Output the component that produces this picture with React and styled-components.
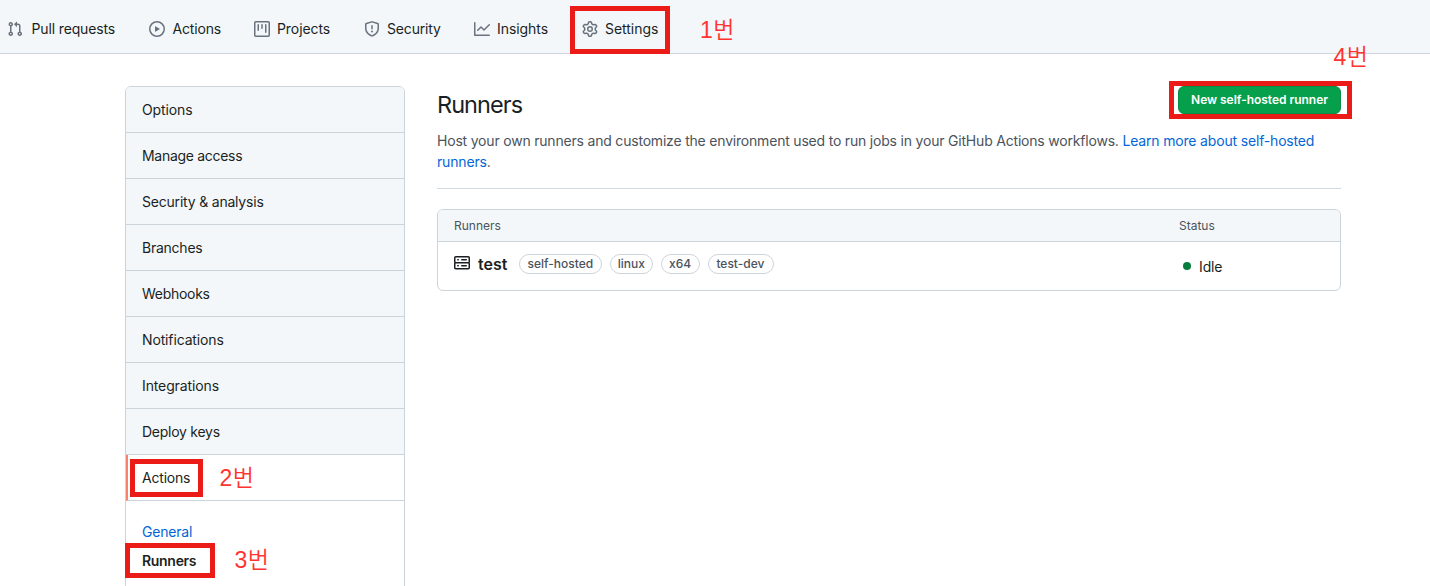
import React from "react";
import styled, { createGlobalStyle } from "styled-components";

const GlobalStyle = createGlobalStyle`
  * { box-sizing: border-box; }
  body {
    margin: 0;
    background: #fff;
    color: #1b1f23;
    font: 400 14px/21px Inter, "Noto Sans CJK KR", sans-serif;
    overflow: hidden;
  }
`;

const icons = {
  pull: "M7.177 3.073L9.573.677A.25.25 0 0110 .854v4.792a.25.25 0 01-.427.177L7.177 3.427a.25.25 0 010-.354zM3.75 2.5a.75.75 0 100 1.5.75.75 0 000-1.5zm-2.25.75a2.25 2.25 0 113 2.122v5.256a2.251 2.251 0 11-1.5 0V5.372A2.25 2.25 0 011.5 3.25zM11 2.5h-1V4h1a1 1 0 011 1v5.628a2.251 2.251 0 101.5 0V5A2.5 2.5 0 0011 2.5zm1 10.25a.75.75 0 111.5 0 .75.75 0 01-1.5 0zM3.75 12a.75.75 0 100 1.5.75.75 0 000-1.5z",
  play: "M1.5 8a6.5 6.5 0 1113 0 6.5 6.5 0 01-13 0zM8 0a8 8 0 100 16A8 8 0 008 0zM6.379 5.227A.25.25 0 006 5.442v5.117a.25.25 0 00.379.214l4.264-2.559a.25.25 0 000-.428L6.379 5.227z",
  project: "M1.75 0A1.75 1.75 0 000 1.75v12.5C0 15.216.784 16 1.75 16h12.5A1.75 1.75 0 0016 14.25V1.75A1.75 1.75 0 0014.25 0H1.75zM1.5 1.75a.25.25 0 01.25-.25h12.5a.25.25 0 01.25.25v12.5a.25.25 0 01-.25.25H1.75a.25.25 0 01-.25-.25V1.75zM11.75 3a.75.75 0 00-.75.75v7.5a.75.75 0 001.5 0v-7.5a.75.75 0 00-.75-.75zm-8.25.75a.75.75 0 011.5 0v5.5a.75.75 0 01-1.5 0v-5.5zM8 3a.75.75 0 00-.75.75v3.5a.75.75 0 001.5 0v-3.5A.75.75 0 008 3z",
  shield: "M7.467.133a1.75 1.75 0 011.066 0l5.25 1.68A1.75 1.75 0 0115 3.48V7c0 1.566-.32 3.182-1.303 4.682-.983 1.498-2.585 2.813-5.032 3.855a1.7 1.7 0 01-1.33 0c-2.447-1.042-4.049-2.357-5.032-3.855C1.32 10.182 1 8.566 1 7V3.48a1.75 1.75 0 011.217-1.667l5.25-1.68zm.61 1.429a.25.25 0 00-.153 0l-5.25 1.68a.25.25 0 00-.174.238V7c0 1.358.275 2.666 1.057 3.86.784 1.194 2.121 2.34 4.366 3.297a.2.2 0 00.154 0c2.245-.956 3.582-2.104 4.366-3.298C13.225 9.666 13.5 8.36 13.5 7V3.48a.25.25 0 00-.174-.237l-5.25-1.68zM9 10.5a1 1 0 11-2 0 1 1 0 012 0zm-.25-5.75a.75.75 0 10-1.5 0v3a.75.75 0 001.5 0v-3z",
  graph: "M1.5 1.75a.75.75 0 00-1.5 0v12.5c0 .414.336.75.75.75h14.5a.75.75 0 000-1.5H1.5V1.75zm14.28 2.53a.75.75 0 00-1.06-1.06L10 7.94 7.53 5.47a.75.75 0 00-1.06 0L3.22 8.72a.75.75 0 001.06 1.06L7 7.06l2.47 2.47a.75.75 0 001.06 0l5.25-5.25z",
  gear: "M7.429 1.525a6.593 6.593 0 011.142 0c.036.003.108.036.137.146l.289 1.105c.147.56.55.967.997 1.189.174.086.341.183.501.29.417.278.97.423 1.53.27l1.102-.303c.11-.03.175.016.195.046.219.31.41.641.573.989.014.031.022.11-.059.19l-.815.806c-.411.406-.562.957-.53 1.456a4.588 4.588 0 010 .582c-.032.499.119 1.05.53 1.456l.815.806c.08.08.073.159.059.19a6.494 6.494 0 01-.573.99c-.02.029-.086.074-.195.045l-1.103-.303c-.559-.153-1.112-.008-1.529.27-.16.107-.327.204-.5.29-.449.222-.851.628-.998 1.189l-.289 1.105c-.029.11-.101.143-.137.146a6.613 6.613 0 01-1.142 0c-.036-.003-.108-.037-.137-.146l-.289-1.105c-.147-.56-.55-.967-.997-1.189a4.502 4.502 0 01-.501-.29c-.417-.278-.97-.423-1.53-.27l-1.102.303c-.11.03-.175-.016-.195-.046a6.492 6.492 0 01-.573-.989c-.014-.031-.022-.11.059-.19l.815-.806c.411-.406.562-.957.53-1.456a4.587 4.587 0 010-.582c.032-.499-.119-1.05-.53-1.456l-.815-.806c-.08-.08-.073-.159-.059-.19a6.44 6.44 0 01.573-.99c.02-.029.086-.075.195-.045l1.103.303c.559.153 1.112.008 1.529-.27.16-.107.327-.204.5-.29.449-.222.851-.628.998-1.189l.289-1.105c.029-.11.101-.143.137-.146zM8 0c-.236 0-.47.01-.701.03-.743.065-1.29.615-1.458 1.261l-.29 1.106c-.017.066-.078.158-.211.224a5.994 5.994 0 00-.668.386c-.123.082-.233.09-.3.071L3.27 2.776c-.644-.177-1.392.02-1.82.63a7.977 7.977 0 00-.704 1.217c-.315.675-.111 1.422.363 1.891l.815.806c.05.048.098.147.088.294a6.084 6.084 0 000 .772c.01.147-.038.246-.088.294l-.815.806c-.474.469-.678 1.216-.363 1.891.2.428.436.835.704 1.218.428.609 1.176.806 1.82.63l1.103-.303c.066-.019.176-.011.299.071.213.143.436.272.668.386.133.066.194.158.212.224l.289 1.106c.169.646.715 1.196 1.458 1.26a8.094 8.094 0 001.402 0c.743-.064 1.29-.614 1.458-1.26l.29-1.106c.017-.066.078-.158.211-.224a5.98 5.98 0 00.668-.386c.123-.082.233-.09.3-.071l1.102.302c.644.177 1.392-.02 1.82-.63.268-.382.505-.789.704-1.217.315-.675.111-1.422-.364-1.891l-.814-.806c-.05-.048-.098-.147-.088-.294a6.1 6.1 0 000-.772c-.01-.147.039-.246.088-.294l.814-.806c.475-.469.679-1.216.364-1.891a7.992 7.992 0 00-.704-1.218c-.428-.609-1.176-.806-1.82-.63l-1.103.303c-.066.019-.176.011-.299-.071a5.991 5.991 0 00-.668-.386c-.133-.066-.194-.158-.212-.224L10.16 1.29C9.99.645 9.444.095 8.701.031A8.094 8.094 0 008 0zm1.5 8a1.5 1.5 0 11-3 0 1.5 1.5 0 013 0zM11 8a3 3 0 11-6 0 3 3 0 016 0z",
  server: "M1.75 1A1.75 1.75 0 000 2.75v4c0 .372.116.717.314 1a1.742 1.742 0 00-.314 1v4c0 .966.784 1.75 1.75 1.75h12.5A1.75 1.75 0 0016 12.75v-4c0-.372-.116-.717-.314-1 .198-.283.314-.628.314-1v-4A1.75 1.75 0 0014.25 1H1.75zm0 7.5a.25.25 0 00-.25.25v4c0 .138.112.25.25.25h12.5a.25.25 0 00.25-.25v-4a.25.25 0 00-.25-.25H1.75zM1.5 2.75a.25.25 0 01.25-.25h12.5a.25.25 0 01.25.25v4a.25.25 0 01-.25.25H1.75a.25.25 0 01-.25-.25v-4zm5.5 2A.75.75 0 017.75 4h4.5a.75.75 0 010 1.5h-4.5A.75.75 0 017 4.75zM7.75 10a.75.75 0 000 1.5h4.5a.75.75 0 000-1.5h-4.5zM3 4.75A.75.75 0 013.75 4h.5a.75.75 0 010 1.5h-.5A.75.75 0 013 4.75zM3.75 10a.75.75 0 000 1.5h.5a.75.75 0 000-1.5h-.5z",
};

const Glyph = styled.svg`
  width: 16px;
  height: 16px;
  flex: none;
  fill: ${(p) => p.$color};
`;

const Icon = ({ name, color = "#6a737d" }) => (
  <Glyph viewBox="0 0 16 16" $color={color}>
    <path fillRule="evenodd" d={icons[name]} />
  </Glyph>
);

const Page = styled.div`
  position: relative;
  height: 586px;
  overflow: hidden;
`;

const Nav = styled.nav`
  display: flex;
  height: 54px;
  padding: 5px 0 0 7px;
  background: #f3f7fa;
  border-bottom: 1px solid #d1d7df;
`;

const Tab = styled.a`
  display: flex;
  align-items: center;
  gap: ${(p) => p.$gap}px;
  width: ${(p) => p.$width}px;
  height: 48px;
  white-space: nowrap;
  letter-spacing: ${(p) => p.$track}px;
`;

const TabText = styled.span`
  padding-bottom: 2px;
`;

const Main = styled.main`
  display: flex;
  gap: 32px;
  padding: 32px 89px 0 125px;
`;

const Menu = styled.aside`
  width: 280px;
  height: 520px;
  flex: none;
  border: 1px solid #ccd4db;
  border-radius: 6px 6px 0 0;
  overflow: hidden;
`;

const MenuItem = styled.a`
  display: flex;
  align-items: center;
  height: 46px;
  padding-left: ${(p) => (p.$active ? 14 : 16)}px;
  border-bottom: 1px solid #ccd4db;
  border-left: ${(p) => (p.$active ? "2px solid #f9826c" : "0")};
  background: ${(p) => (p.$active ? "#fff" : "#f3f7fa")};
  letter-spacing: ${(p) => p.$track}px;
`;

const SubMenu = styled.div`
  display: flex;
  flex-direction: column;
  gap: 8px;
  padding: 20px 16px;
`;

const SubItem = styled.a`
  color: ${(p) => (p.$current ? "#1b1f23" : "#0366d6")};
  font-weight: ${(p) => (p.$current ? 600 : 400)};
  letter-spacing: ${(p) => p.$track}px;
`;

const Content = styled.section`
  flex: 1;
  min-width: 0;
`;

const Heading = styled.header`
  display: flex;
  justify-content: space-between;
  height: 38px;
`;

const Title = styled.h1`
  margin: 0;
  padding-top: 1px;
  font-size: 23.5px;
  line-height: 36px;
  font-weight: 400;
  letter-spacing: -0.95px;
`;

const NewButton = styled.button`
  height: 28px;
  width: 163px;
  padding: 0;
  border: 1px solid #098d43;
  border-radius: 6px;
  background: #069f4b;
  color: #fff;
  font: 600 12px/20px Inter, sans-serif;
  letter-spacing: -0.03px;
  white-space: nowrap;
`;

const Intro = styled.p`
  margin: 0;
  padding: 6px 0 16px;
  border-bottom: 1px solid #d1d9e0;
  color: #4b535c;
  letter-spacing: -0.198px;
`;

const Link = styled.a`
  color: #0366d6;
  letter-spacing: -0.17px;
`;

const Table = styled.div`
  margin-top: 20px;
  height: 82px;
  border: 1px solid #ccd4db;
  border-radius: 6px;
  overflow: hidden;
`;

const TableHead = styled.div`
  display: flex;
  align-items: center;
  height: 32px;
  padding-left: 16px;
  background: #f3f7fa;
  border-bottom: 1px solid #ccd4db;
  color: #4b535c;
  font-size: 12px;
`;

const NameCell = styled.div`
  display: flex;
  width: 725px;
`;

const TableRow = styled.div`
  display: flex;
  height: 48px;
  padding: 12px 0 0 16px;
`;

const IconSlot = styled.span`
  display: flex;
  height: 18px;
  align-items: center;
`;

const RunnerName = styled.strong`
  margin: 0 12px 0 8px;
  font-size: 16px;
  font-weight: 600;
  line-height: 21px;
`;

const Labels = styled.div`
  display: flex;
  gap: 8px;
`;

const Label = styled.span`
  width: ${(p) => p.$width}px;
  height: 20px;
  padding-right: 1px;
  border: 1px solid #ccd4db;
  border-radius: 10px;
  color: #4b535c;
  font-size: 12px;
  font-weight: 500;
  line-height: 18px;
  text-align: center;
  white-space: nowrap;
`;

const Status = styled.div`
  display: flex;
  align-items: center;
  gap: 8px;
  height: 24px;
  padding-left: 4px;
  letter-spacing: -0.12px;
`;

const Dot = styled.i`
  width: 8px;
  height: 8px;
  border-radius: 50%;
  background: #067d3c;
`;

/* Annotations drawn over the page */
const Marker = styled.div`
  position: absolute;
  left: ${(p) => p.$x}px;
  top: ${(p) => p.$y}px;
  width: ${(p) => p.$w}px;
  height: ${(p) => p.$h}px;
  border: 5px solid #eb1c17;
`;

const Step = styled.span`
  position: absolute;
  left: ${(p) => p.$x}px;
  top: ${(p) => p.$y}px;
  color: #ff3431;
  font: 350 23px/28px "Liberation Sans", "Noto Sans CJK KR", sans-serif;
  letter-spacing: 0.4px;
  white-space: nowrap;
`;

const tabs = [
  ["pull", "Pull requests", 142, -0.14, 8.5],
  ["play", "Actions", 105, -0.17, 7.5],
  ["project", "Projects", 110, -0.08, 7],
  ["shield", "Security", 110, -0.17, 7],
  ["graph", "Insights", 108, -0.06, 7],
  ["gear", "Settings", 90, -0.04, 7],
];

const menu = [
  ["Options", -0.12],
  ["Manage access", -0.3],
  ["Security & analysis", -0.2],
  ["Branches", -0.24],
  ["Webhooks", -0.28],
  ["Notifications", -0.14],
  ["Integrations", -0.12],
  ["Deploy keys", -0.26],
];

const labels = [["self-hosted", 83], ["linux", 43], ["x64", 38.5], ["test-dev", 66]];

const markers = [[570, 6, 100, 48], [1169, 81, 183, 38], [130, 459, 73, 38], [125, 543, 90, 35]];
const steps = [["1번", 700, 16], ["2번", 219.5, 464], ["3번", 234.5, 546], ["4번", 1333.5, 43]];

export default function App() {
  return (
    <Page>
      <GlobalStyle />
      <Nav>
        {tabs.map(([icon, text, width, track, gap]) => (
          <Tab key={text} $width={width} $track={track} $gap={gap}>
            <Icon name={icon} />
            <TabText>{text}</TabText>
          </Tab>
        ))}
      </Nav>
      <Main>
        <Menu>
          {menu.map(([text, track]) => <MenuItem key={text} $track={track}>{text}</MenuItem>)}
          <MenuItem $active $track={-0.2}>Actions</MenuItem>
          <SubMenu>
            <SubItem $track={-0.2}>General</SubItem>
            <SubItem $current $track={-0.3}>Runners</SubItem>
          </SubMenu>
        </Menu>
        <Content>
          <Heading>
            <Title>Runners</Title>
            <NewButton>New self-hosted runner</NewButton>
          </Heading>
          <Intro>
            Host your own runners and customize the environment used to run jobs in your GitHub Actions workflows. <Link>Learn more about self-hosted<br />runners</Link>.
          </Intro>
          <Table>
            <TableHead><NameCell>Runners</NameCell>Status</TableHead>
            <TableRow>
              <NameCell>
                <IconSlot><Icon name="server" color="#1b1f23" /></IconSlot>
                <RunnerName>test</RunnerName>
                <Labels>
                  {labels.map(([text, width]) => <Label key={text} $width={width}>{text}</Label>)}
                </Labels>
              </NameCell>
              <Status><Dot />Idle</Status>
            </TableRow>
          </Table>
        </Content>
      </Main>
      {markers.map(([x, y, w, h]) => <Marker key={x} $x={x} $y={y} $w={w} $h={h} />)}
      {steps.map(([text, x, y]) => <Step key={text} $x={x} $y={y}>{text}</Step>)}
    </Page>
  );
}
